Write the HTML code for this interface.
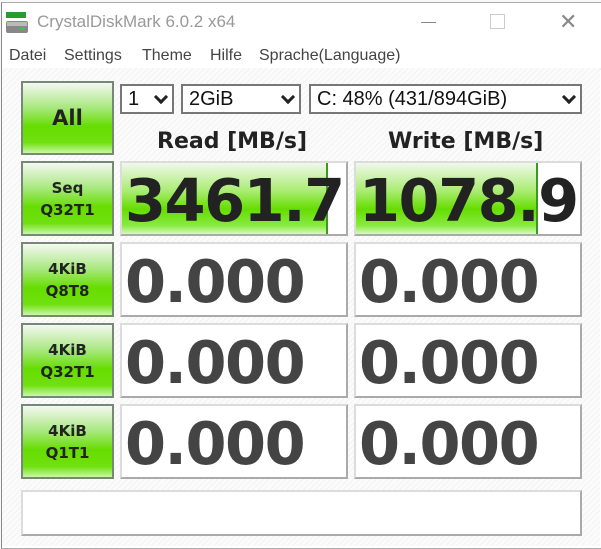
<!DOCTYPE html>
<html><head><meta charset="utf-8"><style>
*{margin:0;padding:0;box-sizing:border-box}
body{width:601px;height:549px;background:#f8f8f8;position:relative;overflow:hidden;font-family:"Liberation Sans",sans-serif}
.win{position:absolute;left:1px;top:2px;width:600px;height:547px;border-left:1px solid #888;border-top:1px solid #aaa;border-bottom:1px solid #aaa;background:#fff}
.title{position:absolute;left:0;top:0;width:600px;height:38px;background:#fff}
.tt{position:absolute;left:35px;top:9px;font-size:17px;color:#999}
.menu{position:absolute;left:0;top:38px;width:600px;height:29px;background:#fff;border-bottom:2px solid #f0f0f0;font-size:16px;color:#444}
.menu span{position:absolute;top:6px}
.client{position:absolute;left:2px;top:68px;width:598px;height:478px;background:repeating-linear-gradient(135deg,#fbfbfb 0 3px,#f3f3f3 3px 4px)}
.btn{position:absolute;left:21px;width:93px;border:2px solid #778877;background:linear-gradient(#f4f8f2 0%,#a8e880 35%,#66dd00 62%,#70e010 85%,#c8f8a8 100%);font-family:"DejaVu Sans",sans-serif;font-weight:bold;color:#222;text-align:center;display:flex;align-items:center;justify-content:center;font-size:15px;line-height:22px}
.cell{position:absolute;width:228px;height:75px;border:2px solid;border-color:#dcdcdc #aaa #aaa #dcdcdc;background:#fff;overflow:hidden}
.fill{position:absolute;left:0;top:0;bottom:0;background:linear-gradient(#f0f8ec 0%,#a8ec70 40%,#66dd00 65%,#88ea40 88%,#d8f8c0 100%);border-right:2px solid #3a9a20}
.num{position:absolute;left:3px;top:3px;font-family:"DejaVu Sans",sans-serif;font-weight:bold;font-size:59px;line-height:70px;color:#222;letter-spacing:-1.5px;white-space:nowrap}
.z{color:#444}
.sel{position:absolute;top:84px;height:30px;border:2px solid #777;background:#fff;font-size:20px;color:#111;padding-left:6px;line-height:26px}
.sel i{position:absolute;right:6px;top:6px;width:10px;height:10px;border-right:3px solid #222;border-bottom:3px solid #222;transform:rotate(45deg)}
.hd{position:absolute;top:129px;font-family:"DejaVu Sans",sans-serif;font-weight:bold;font-size:22px;color:#222}
</style></head><body>
<div class="win">
<div class="title">
<svg style="position:absolute;left:4px;top:9px" width="22" height="22"><rect x="0" y="0" width="20" height="6" fill="#2a9a2a"/><rect x="0" y="9" width="22" height="12" rx="2" fill="#888"/><rect x="1" y="10" width="20" height="4" fill="#bbb"/><rect x="14" y="15" width="5" height="3" fill="#3c3"/></svg>
<div class="tt">CrystalDiskMark 6.0.2 x64</div>
<div style="position:absolute;left:419px;top:19px;width:15px;height:1px;background:#888"></div>
<div style="position:absolute;left:488px;top:11px;width:15px;height:15px;border:1px solid #ccc"></div>
<div style="position:absolute;left:557px;top:6px;font-size:22px;color:#888;font-weight:300">✕</div>
</div>
<div class="menu"><span style="left:7px">Datei</span><span style="left:62px">Settings</span><span style="left:140px">Theme</span><span style="left:208px">Hilfe</span><span style="left:257px">Sprache(Language)</span></div>
</div>
<div class="client"></div>
<div class="btn" style="top:81px;height:74px;font-size:21px">All</div>
<div class="sel" style="left:120px;width:54px">1<i></i></div>
<div class="sel" style="left:181px;width:120px">2GiB<i></i></div>
<div class="sel" style="left:309px;width:273px">C: 48% (431/894GiB)<i></i></div>
<div class="hd" style="left:157px">Read [MB/s]</div>
<div class="hd" style="left:388px">Write [MB/s]</div>

<div class="btn" style="top:161px;height:75px">Seq<br>Q32T1</div>
<div class="cell" style="left:120px;top:161px"><div class="fill" style="width:206px"></div><div class="num">3461.7</div></div>
<div class="cell" style="left:354px;top:161px"><div class="fill" style="width:182px"></div><div class="num">1078.9</div></div>

<div class="btn" style="top:242px;height:75px">4KiB<br>Q8T8</div>
<div class="cell" style="left:120px;top:242px"><div class="num z">0.000</div></div>
<div class="cell" style="left:354px;top:242px"><div class="num z">0.000</div></div>

<div class="btn" style="top:323px;height:75px">4KiB<br>Q32T1</div>
<div class="cell" style="left:120px;top:323px"><div class="num z">0.000</div></div>
<div class="cell" style="left:354px;top:323px"><div class="num z">0.000</div></div>

<div class="btn" style="top:404px;height:75px">4KiB<br>Q1T1</div>
<div class="cell" style="left:120px;top:404px"><div class="num z">0.000</div></div>
<div class="cell" style="left:354px;top:404px"><div class="num z">0.000</div></div>

<div class="cell" style="left:21px;top:490px;width:561px;height:46px"></div>
</body></html>
